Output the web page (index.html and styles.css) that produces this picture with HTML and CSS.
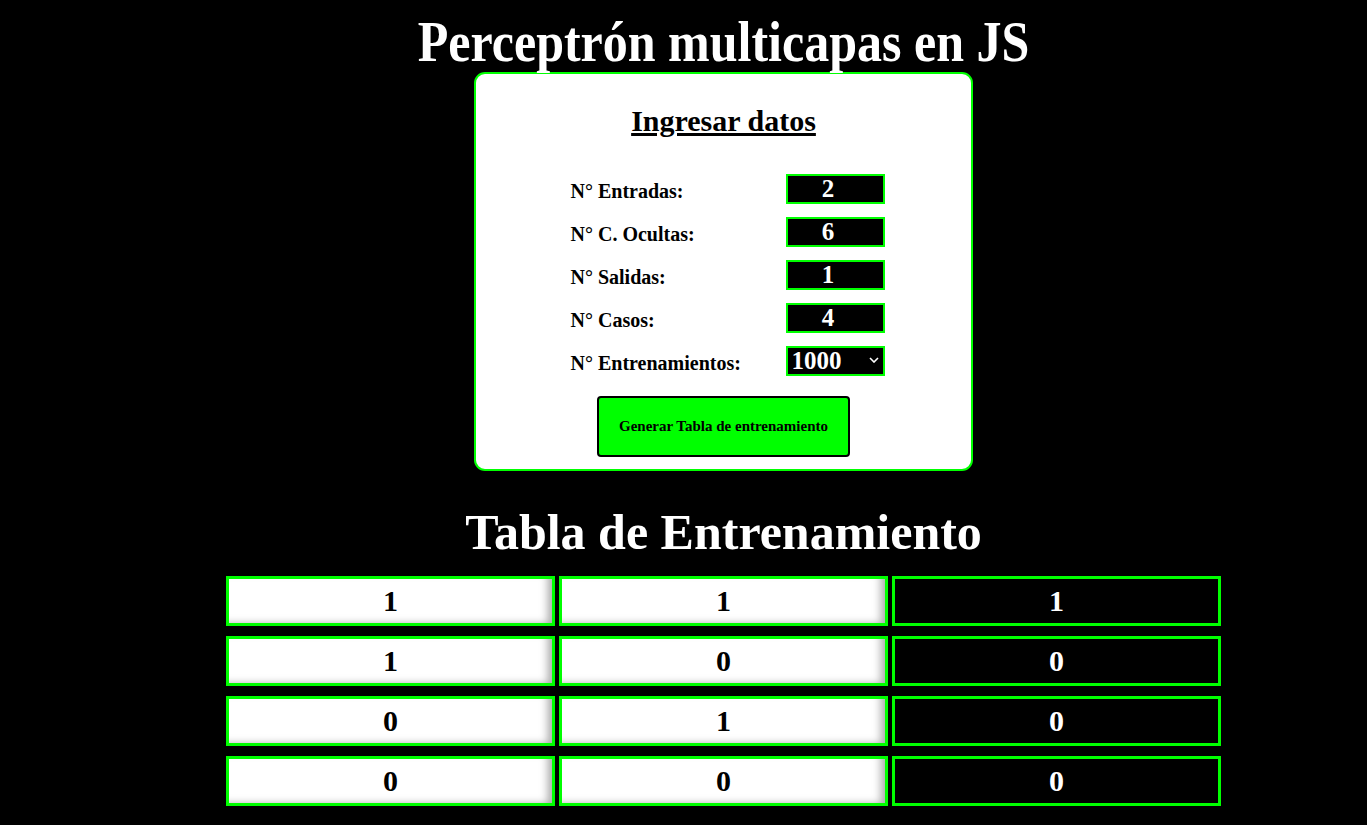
FILE: index.html
```html
<!DOCTYPE html>
<html lang="es">
<head>
<meta charset="utf-8">
<title>Perceptrón multicapas en JS</title>
<link rel="stylesheet" href="styles.css">
</head>
<body>
<main class="page">
  <h1 class="title">Perceptrón multicapas en JS</h1>
  <section class="card">
    <h2 class="card-title">Ingresar datos</h2>
    <div class="form">
      <label class="label">N° Entradas:</label>
      <div class="field">2</div>
      <label class="label">N° C. Ocultas:</label>
      <div class="field">6</div>
      <label class="label">N° Salidas:</label>
      <div class="field">1</div>
      <label class="label">N° Casos:</label>
      <div class="field">4</div>
      <label class="label">N° Entrenamientos:</label>
      <div class="field select"><span>1000</span><svg class="chev" viewBox="0 0 10 6" width="10" height="6"><path d="M1 1 L5 5 L9 1" fill="none" stroke="#fff" stroke-width="1.6"/></svg></div>
    </div>
    <button class="btn">Generar Tabla de entrenamiento</button>
  </section>
  <h1 class="subtitle">Tabla de Entrenamiento</h1>
  <div class="table">
    <div class="cell in">1</div><div class="cell in">1</div><div class="cell out">1</div>
    <div class="cell in">1</div><div class="cell in">0</div><div class="cell out">0</div>
    <div class="cell in">0</div><div class="cell in">1</div><div class="cell out">0</div>
    <div class="cell in">0</div><div class="cell in">0</div><div class="cell out">0</div>
  </div>
</main>
</body>
</html>
```
FILE: styles.css
```css
html, body {
  margin: 0;
  background: #000;
  font-family: "Liberation Serif", "Times New Roman", serif;
}
.page {
  padding-left: 80px;
  display: flex;
  flex-direction: column;
  align-items: center;
}
.title {
  color: #fff;
  font-size: 50px;
  font-weight: bold;
  margin: 14px 0 0;
  line-height: 60px;
  height: 58px;
  transform: scaleY(1.12);
  transform-origin: 50% 80%;
}
.card {
  box-sizing: border-box;
  width: 499px;
  height: 399px;
  background: #fff;
  border: 2px solid #00ff00;
  border-radius: 11px;
  display: flex;
  flex-direction: column;
  align-items: center;
}
.card-title {
  margin: 29px 0 0;
  font-size: 30px;
  line-height: 36px;
  text-decoration: underline;
  color: #000;
}
.form {
  margin-top: 35px;
  display: grid;
  grid-template-columns: 215px 99px;
  row-gap: 13px;
  margin-left: 8px;
}
.label {
  font-size: 20px;
  font-weight: bold;
  display: flex;
  align-items: center;
  padding-top: 4px;
}
.field {
  box-sizing: border-box;
  height: 30px;
  border: 2px solid #00ff00;
  background: #000;
  color: #fff;
  font-size: 25px;
  font-weight: bold;
  display: flex;
  align-items: center;
  justify-content: center;
  padding-right: 14px;
}
.field.select {
  justify-content: space-between;
  padding: 0 4px 0 4px;
}
.chev { margin-top: -2px; }
.btn {
  margin-top: 20px;
  width: 253px;
  height: 61px;
  background: #00ff00;
  border: 2px solid #000;
  border-radius: 4px;
  font-family: "Liberation Serif", "Times New Roman", serif;
  font-size: 15px;
  font-weight: bold;
  color: #000;
}
.subtitle {
  color: #fff;
  font-size: 50px;
  font-weight: bold;
  margin: 33px 0 0;
  line-height: 56px;
}
.table {
  margin-top: 16px;
  display: grid;
  grid-template-columns: repeat(3, 329px);
  column-gap: 4px;
  row-gap: 10px;
}
.cell {
  box-sizing: border-box;
  height: 50px;
  border: 3px solid #00ff00;
  font-size: 30px;
  font-weight: bold;
  display: flex;
  align-items: center;
  justify-content: center;
}
.cell.in {
  background: #fff;
  color: #000;
  box-shadow: inset -8px -3px 8px -4px rgba(0,0,0,0.35);
}
.cell.out {
  background: #000;
  color: #fff;
}
```
